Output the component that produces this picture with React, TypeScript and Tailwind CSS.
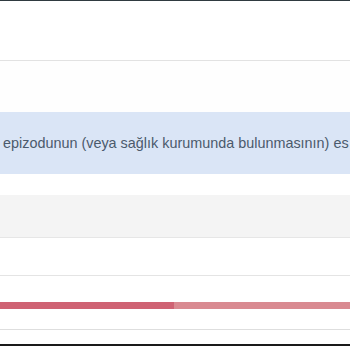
export default function App() {
  return (
    <div className="w-[350px] h-[350px] overflow-hidden bg-white flex flex-col" style={{ fontFamily: '"Liberation Sans", Arial, sans-serif' }}>
      <div className="h-px bg-[#2f3a40] shrink-0" />
      <div className="h-[60px] shrink-0 bg-white border-b border-[#e2e2e2]" />
      <div className="h-[51px] shrink-0 bg-[#fefefe]" />
      <div className="h-[62px] shrink-0 bg-[#dae5f6] flex items-center pl-[3px] overflow-hidden">
        <p className="whitespace-nowrap text-[14.4px] text-[#4b5a6c] leading-none">
          epizodunun (veya sağlık kurumunda bulunmasının) es
        </p>
      </div>
      <div className="h-[21px] shrink-0 bg-white" />
      <div className="h-[43px] shrink-0 bg-[#f4f4f4] border-b border-[#e6e6e6]" />
      <div className="h-[38px] shrink-0 bg-white border-b border-[#e4e4e4]" />
      <div className="h-[26px] shrink-0 bg-white" />
      <div className="h-[7px] shrink-0 flex">
        <div className="w-[174px] bg-[#cf6273]" />
        <div className="flex-1 bg-[#d98a91]" />
      </div>
      <div className="h-[21px] shrink-0 bg-white border-b border-[#dedede]" />
      <div className="h-[14px] shrink-0 bg-white" />
      <div className="h-[2px] shrink-0 bg-[#1a1a1a]" />
    </div>
  );
}
